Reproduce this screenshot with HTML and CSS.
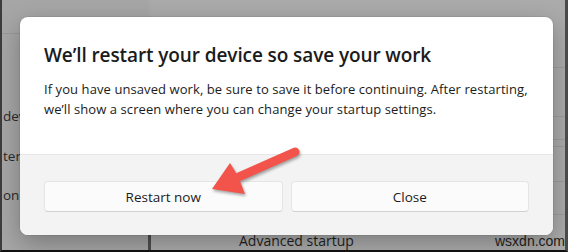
FILE: index.html
```html
<!DOCTYPE html>
<html lang="en">
<head>
<meta charset="utf-8">
<title>Restart</title>
<link rel="stylesheet" href="styles.css">
</head>
<body>
<div class="screen">
  <div class="bg">
    <nav class="bg-nav">
      <div class="nav-top"></div>
      <div class="nav-item nav-1">dev</div>
      <div class="nav-item nav-2">tern</div>
      <div class="nav-item nav-3">on</div>
    </nav>
    <div class="bg-scroll"><div class="scroll-thumb"></div></div>
    <main class="bg-main">
      <div class="row r1"></div>
      <div class="row r2"></div>
      <div class="row r3"></div>
      <div class="row r4"></div>
      <div class="row r5"></div>
      <div class="row r6"></div>
      <div class="row-adv"><span class="adv-text">Advanced startup</span></div>
    </main>
  </div>

  <div class="scrim">
    <div class="dialog">
      <div class="dialog-body">
        <h1 class="dialog-title">We’ll restart your device so save your work</h1>
        <p class="dialog-text">If you have unsaved work, be sure to save it before continuing. After restarting, we’ll show a screen where you can change your startup settings.</p>
      </div>
      <div class="dialog-footer">
        <button class="btn">Restart now</button>
        <button class="btn">Close</button>
      </div>
    </div>
  </div>

  <svg class="arrow" viewBox="200 140 110 70" width="110" height="70">
    <g class="arrow-shape">
      <line x1="295" y1="152" x2="234" y2="179" stroke="#f2534b" stroke-width="9" stroke-linecap="round"/>
      <polygon points="212,189 230,163 238,176 245,194" fill="#f2534b"/>
    </g>
  </svg>

  <span class="watermark">wsxdn.com</span>
</div>
</body>
</html>
```

FILE: styles.css
```css
* { box-sizing: border-box; }

html, body {
  margin: 0;
  padding: 0;
  background: #ffffff;
}

.screen {
  position: relative;
  width: 568px;
  height: 252px;
  overflow: hidden;
  background: #a8a8a8;
  border-left: 2px solid #3c3c3c;
  border-right: 3px solid #4a4a4a;
  border-bottom: 2px solid #111111;
  font-family: "Open Sans", "Noto Sans", sans-serif;
}

/* dimmed settings window behind the dialog */
.bg {
  display: flex;
  height: 250px;
}

.bg-nav {
  width: 146px;
  display: flex;
  flex-direction: column;
  background: #a6a6a6;
}

.nav-top {
  height: 34px;
  border-bottom: 1px solid #999999;
}

.nav-item {
  font-size: 13.5px;
  line-height: 20px;
  color: #2a2a2a;
  white-space: nowrap;
  padding-left: 1px;
}

.nav-1 { margin-top: 72px; }
.nav-2 { margin-top: 20px; }
.nav-3 { margin-top: 19px; }

.bg-scroll {
  width: 3px;
  display: flex;
  flex-direction: column;
  justify-content: flex-end;
}

.scroll-thumb {
  height: 40px;
  background: #4e4e4e;
}

.bg-main {
  flex: 1;
  display: flex;
  flex-direction: column;
  background: #ababab;
}

.row { border-bottom: 1px solid #9d9d9d; }
.r1 { height: 68px; }
.r2 { height: 49px; }
.r3 { height: 23px; }
.r4 { height: 7px; }
.r5 { height: 35px; }
.r6 { height: 33px; }

.row-adv {
  flex: 1;
  display: flex;
  align-items: flex-end;
  padding-left: 88px;
}

.adv-text {
  font-size: 14px;
  line-height: 20px;
  color: #1f1f1f;
  margin-bottom: -1px;
}

/* modal */
.scrim {
  position: absolute;
  inset: 0;
  padding: 17px 0 0 18px;
}

.dialog {
  width: 533px;
  height: 218px;
  background: #ffffff;
  border-radius: 8px;
  overflow: hidden;
  display: flex;
  flex-direction: column;
  box-shadow: 0 8px 24px rgba(0, 0, 0, 0.28), 0 0 0 1px rgba(0, 0, 0, 0.06);
}

.dialog-body {
  height: 138px;
  padding: 24px 24px 0 24px;
}

.dialog-title {
  margin: 0;
  font-size: 19px;
  line-height: 28px;
  font-weight: 600;
  letter-spacing: -0.1px;
  color: #1b1b1b;
}

.dialog-text {
  margin: 10px 0 0 0;
  font-size: 13px;
  line-height: 20px;
  letter-spacing: 0.08px;
  color: #1b1b1b;
}

.dialog-footer {
  flex: 1;
  display: flex;
  gap: 8px;
  padding: 26px 24px 23px 24px;
  background: #f3f3f3;
  border-top: 1px solid #e6e6e6;
}

.btn {
  flex: 1;
  height: 31px;
  margin: 0;
  padding: 0;
  font-family: inherit;
  font-size: 13.5px;
  color: #1b1b1b;
  background: #fbfbfb;
  border: 1px solid #e5e5e5;
  border-bottom-color: #d0d0d0;
  border-radius: 4px;
}

/* annotation arrow */
.arrow {
  position: absolute;
  left: 198px;
  top: 140px;
  overflow: visible;
}

.arrow-shape {
  filter: drop-shadow(1px 2px 1.5px rgba(0, 0, 0, 0.35));
}

.watermark {
  position: absolute;
  left: 493px;
  top: 233px;
  font-family: "Liberation Sans", Arial, sans-serif;
  font-size: 14px;
  line-height: 16px;
  color: #1a1a1a;
}
```
